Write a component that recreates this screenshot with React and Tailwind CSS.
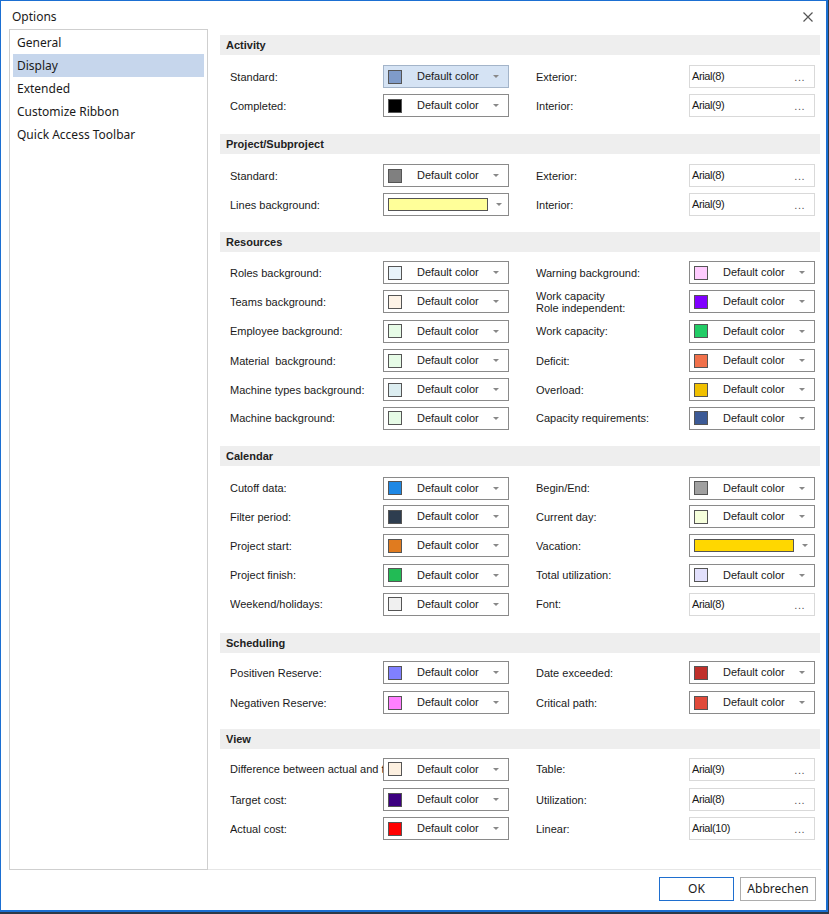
import React from "react";

const sections = [
  {
    title: "Activity",
    pt: "pt-[7px]",
    mb: "mb-[14px]",
    rows: [
      { h: "h-[29px]", l: { label: "Standard:", color: "#7f9bc9", sel: true }, r: { label: "Exterior:", font: "Arial(8)" } },
      { h: "h-[29px]", l: { label: "Completed:", color: "#000000" }, r: { label: "Interior:", font: "Arial(9)" } },
    ],
  },
  {
    title: "Project/Subproject",
    pt: "pt-[7px]",
    mb: "mb-[13px]",
    rows: [
      { h: "h-[29px]", l: { label: "Standard:", color: "#808080" }, r: { label: "Exterior:", font: "Arial(8)" } },
      { h: "h-[29px]", l: { label: "Lines background:", bar: "#ffff99" }, r: { label: "Interior:", font: "Arial(9)" } },
    ],
  },
  {
    title: "Resources",
    pt: "pt-[6px]",
    mb: "mb-[14px]",
    rows: [
      { h: "h-[29px]", l: { label: "Roles background:", color: "#e8f3fa" }, r: { label: "Warning background:", color: "#ffccff" } },
      { h: "h-[29px]", l: { label: "Teams background:", color: "#fdf3e7" }, r: { label: "Work capacity\nRole independent:", color: "#8000ff" } },
      { h: "h-[30px]", l: { label: "Employee background:", color: "#e6fbe6" }, r: { label: "Work capacity:", color: "#22cc66" } },
      { h: "h-[29px]", l: { label: "Material  background:", color: "#e6fbe6" }, r: { label: "Deficit:", color: "#f0704a" } },
      { h: "h-[29px]", l: { label: "Machine types background:", color: "#dcedf0" }, r: { label: "Overload:", color: "#f0c000" } },
      { h: "h-[28px]", l: { label: "Machine background:", color: "#e6fbe6" }, r: { label: "Capacity requirements:", color: "#3c5a96" } },
    ],
  },
  {
    title: "Calendar",
    pt: "pt-[7px]",
    mb: "mb-[14px]",
    rows: [
      { h: "h-[30px]", l: { label: "Cutoff data:", color: "#1e88e5" }, r: { label: "Begin/End:", color: "#a0a0a0" } },
      { h: "h-[27px]", l: { label: "Filter period:", color: "#2e3d4f" }, r: { label: "Current day:", color: "#f6ffdc" } },
      { h: "h-[31px]", l: { label: "Project start:", color: "#e07b1f" }, r: { label: "Vacation:", bar: "#ffd700" } },
      { h: "h-[28px]", l: { label: "Project finish:", color: "#22bb55" }, r: { label: "Total utilization:", color: "#e2e0fc" } },
      { h: "h-[30px]", l: { label: "Weekend/holidays:", color: "#f0f0f0" }, r: { label: "Font:", font: "Arial(8)" } },
    ],
  },
  {
    title: "Scheduling",
    pt: "pt-[5px]",
    mb: "mb-[11px]",
    rows: [
      { h: "h-[29px]", l: { label: "Positiven Reserve:", color: "#8080ff" }, r: { label: "Date exceeded:", color: "#c0302b" } },
      { h: "h-[31px]", l: { label: "Negativen Reserve:", color: "#ff80ff" }, r: { label: "Critical path:", color: "#e04a3a" } },
    ],
  },
  {
    title: "View",
    pt: "pt-[5px]",
    mb: "mb-0",
    rows: [
      { h: "h-[30px]", l: { label: "Difference between actual and target", color: "#fdf0e0" }, r: { label: "Table:", font: "Arial(9)" } },
      { h: "h-[31px]", l: { label: "Target cost:", color: "#3c0080" }, r: { label: "Utilization:", font: "Arial(8)" } },
      { h: "h-[27px]", l: { label: "Actual cost:", color: "#ff0000" }, r: { label: "Linear:", font: "Arial(10)" } },
    ],
  },
];

const navItems = ["General", "Display", "Extended", "Customize Ribbon", "Quick Access Toolbar"];

const Arrow = () => (
  <svg width="6" height="3" viewBox="0 0 6 3" className="shrink-0">
    <path d="M0 0H6L3 3Z" fill="#888" />
  </svg>
);

const Field = ({ item }) => {
  if (item.font) {
    return (
      <div className="w-[126px] h-[23px] shrink-0 border border-[#d9d9d9] bg-white flex items-start justify-between pl-[2px] pr-[9px] pt-[2px]">
        <span className="tracking-[-0.4px]">{item.font}</span>
        <span className="text-[#555] tracking-[0.5px] leading-[19px]">...</span>
      </div>
    );
  }
  if (item.bar) {
    return (
      <div className="w-[126px] h-[23px] shrink-0 border border-[#8a8a8a] bg-white flex items-center pl-[4px]">
        <div className="w-[100px] h-[13px] shrink-0 border border-[#555]" style={{ backgroundColor: item.bar }} />
        <div className="ml-[8px]">
          <Arrow />
        </div>
      </div>
    );
  }
  return (
    <div
      className={`w-[126px] h-[23px] shrink-0 border flex items-center pl-[4px] pr-[9px] ${
        item.sel ? "border-[#a3b4c9] bg-[#d5e3f4]" : "border-[#8a8a8a] bg-white"
      }`}
    >
      <div className="w-[14px] h-[14px] border border-[#555] shrink-0" style={{ backgroundColor: item.color }} />
      <span className="ml-[15px] flex-1">Default color</span>
      <Arrow />
    </div>
  );
};

const Label = ({ text }) => (
  <div className="w-[153px] shrink-0 overflow-hidden whitespace-pre leading-[12px] text-[#1a1a1a]">{text}</div>
);

export default function App() {
  return (
    <div className="w-[829px] h-[914px] bg-[#2d3a48]">
      <div
        className="w-[828px] h-[912px] bg-white border-l border-t border-r-2 border-b-2 border-[#1b6fd2] flex flex-col text-[#1a1a1a]"
        style={{ fontFamily: '"Noto Sans", "Liberation Sans", sans-serif' }}
      >
        {/* title bar */}
        <div className="h-[28px] flex items-center justify-between pl-[11px] pr-[13px] shrink-0">
          <span className="text-[12px] pt-[4px]">Options</span>
          <svg width="10" height="10" viewBox="0 0 10 10" className="mt-[4px]">
            <path d="M0.5 0.5L9.5 9.5M9.5 0.5L0.5 9.5" stroke="#555" strokeWidth="1.2" />
          </svg>
        </div>

        {/* body */}
        <div className="flex h-[840px] pl-[8px] shrink-0">
          <div className="w-[199px] border-t border-l border-r border-[#cfcfcf] pt-[1px] px-[3px] text-[12px]">
            {navItems.map((n) => (
              <div
                key={n}
                className={`h-[23px] flex items-center pl-[4px] ${n === "Display" ? "bg-[#c6d6ec]" : ""}`}
              >
                {n}
              </div>
            ))}
          </div>

          <div
            className="ml-[12px] w-[600px] pt-[6px] text-[11px]"
            style={{ fontFamily: '"Liberation Sans", Arial, sans-serif' }}
          >
            {sections.map((s) => (
              <div key={s.title} className={s.mb}>
                <div className="h-[20px] bg-[#eeeeee] flex items-center pl-[6px] font-bold text-[#222]">
                  {s.title}
                </div>
                <div className={s.pt}>
                  {s.rows.map((r, i) => (
                    <div key={i} className={`${r.h} flex items-center pl-[10px]`}>
                      <Label text={r.l.label} />
                      <Field item={r.l} />
                      <div className="w-[27px] shrink-0" />
                      <Label text={r.r.label} />
                      <Field item={r.r} />
                    </div>
                  ))}
                </div>
              </div>
            ))}
          </div>
        </div>

        {/* separator */}
        <div className="flex pl-[8px] h-px shrink-0">
          <div className="w-[199px] bg-[#cfcfcf]" />
          <div className="w-[613px] bg-[#e6e6e6]" />
        </div>

        {/* footer */}
        <div className="flex justify-end gap-[6px] pr-[10px] pt-[7px] text-[12px]">
          <button className="w-[75px] h-[24px] border border-[#1f6fcf] bg-white">OK</button>
          <button className="w-[76px] h-[24px] border border-[#adadad] bg-white">Abbrechen</button>
        </div>
      </div>
    </div>
  );
}
